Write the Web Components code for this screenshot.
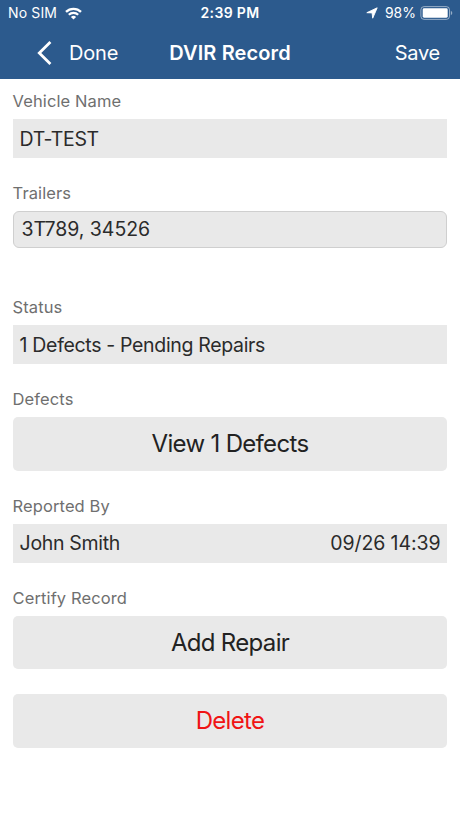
<!DOCTYPE html>
<html lang="en">
<head>
<meta charset="utf-8">
<meta name="viewport" content="width=device-width, initial-scale=1">
<title>DVIR Record</title>
<style>
  body {
    margin: 0;
    background: #fff;
    font-family: Inter, "Liberation Sans", sans-serif;
  }
</style>
</head>
<body>
<dvir-screen></dvir-screen>

<script>
class StatusBar extends HTMLElement {
  constructor() {
    super();
    this.attachShadow({ mode: "open" });
  }
  connectedCallback() {
    this.shadowRoot.innerHTML = `
      <style>
        :host {
          display: grid;
          grid-template-columns: 1fr auto 1fr;
          align-items: center;
          height: 26px;
          padding: 0 7px 0 8px;
          font-size: 14px;
          line-height: 26px;
          white-space: nowrap;
        }
        .left, .right {
          display: flex;
          align-items: center;
        }
        .right {
          justify-content: flex-end;
        }
        .carrier {
          letter-spacing: 0.15px;
        }
        .time {
          margin-right: 1px;
          font-weight: 600;
          letter-spacing: 0.35px;
        }
        .wifi {
          margin-left: 8px;
        }
        .battery {
          margin-left: 4px;
        }
        .percent {
          margin-left: 7px;
        }
        svg {
          display: block;
        }
      </style>
      <div class="left">
        <span class="carrier">${this.getAttribute("carrier")}</span>
        <svg class="wifi" width="17" height="13" viewBox="0 0 17 13" fill="none" stroke="#fff">
          <path d="M1 4.9a10.6 10.6 0 0 1 15 0" stroke-width="2.3"/>
          <path d="M3.8 7.8a6.7 6.7 0 0 1 9.4 0" stroke-width="2.2"/>
          <path d="M8.5 12.6 5.9 10a3.7 3.7 0 0 1 5.2 0z" fill="#fff" stroke="none"/>
        </svg>
      </div>
      <span class="time">${this.getAttribute("time")}</span>
      <div class="right">
        <svg width="12" height="12" viewBox="0 0 12 12">
          <path d="M11.2.8 6.7 11.2 6.1 5.9.8 5.7z" fill="#fff" stroke="#fff" stroke-width=".9" stroke-linejoin="round"/>
        </svg>
        <span class="percent">${this.getAttribute("battery")}</span>
        <svg class="battery" width="33" height="14" viewBox="0 0 33 14">
          <rect x=".9" y=".6" width="28.6" height="12.8" rx="3.2" fill="none" stroke="#fff" stroke-opacity=".5"/>
          <rect x="2.7" y="2.3" width="25" height="9.4" rx="1.4" fill="#fff"/>
          <path d="M30.8 4.8q1.5.8 1.5 2.2t-1.5 2.2z" fill="#fff" fill-opacity=".5"/>
        </svg>
      </div>
    `;
  }
}
customElements.define("status-bar", StatusBar);

class NavBar extends HTMLElement {
  constructor() {
    super();
    this.attachShadow({ mode: "open" });
  }
  connectedCallback() {
    this.shadowRoot.innerHTML = `
      <style>
        :host {
          display: grid;
          grid-template-columns: 1fr auto 1fr;
          align-items: center;
          height: 53px;
          padding: 0 20px 0 37px;
          box-sizing: border-box;
          font-size: 20px;
          line-height: 26px;
        }
        .back {
          display: flex;
          align-items: center;
          gap: 17px;
          padding-top: 1px;
          letter-spacing: -0.2px;
        }
        .title {
          margin-right: 17px;
          font-weight: 600;
          letter-spacing: 0.12px;
        }
        .save {
          text-align: right;
          letter-spacing: -0.25px;
        }
        svg {
          display: block;
        }
      </style>
      <div class="back">
        <svg width="15" height="24" viewBox="0 0 15 24" fill="none" stroke="#fff" stroke-width="2.8">
          <path d="M13.4 1 2.3 12l11.1 11"/>
        </svg>
        <slot name="back"></slot>
      </div>
      <span class="title"><slot></slot></span>
      <div class="save"><slot name="action"></slot></div>
    `;
  }
}
customElements.define("nav-bar", NavBar);

class FormRow extends HTMLElement {
  constructor() {
    super();
    this.attachShadow({ mode: "open" });
  }
  connectedCallback() {
    this.shadowRoot.innerHTML = `
      <style>
        :host {
          display: flex;
          flex-direction: column;
          gap: 8px;
        }
        .label {
          height: 20px;
          line-height: 20px;
          font-size: 16.5px;
          letter-spacing: 0.1px;
          color: #6f6f6f;
        }
      </style>
      <div class="label"><span>${this.getAttribute("label")}</span></div>
      <slot></slot>
    `;
  }
}
customElements.define("form-row", FormRow);

class ValueBox extends HTMLElement {
  constructor() {
    super();
    this.attachShadow({ mode: "open" });
  }
  connectedCallback() {
    this.shadowRoot.innerHTML = `
      <style>
        :host {
          display: flex;
          justify-content: space-between;
          align-items: center;
          height: 39px;
          padding: 0 7px;
          box-sizing: border-box;
          background: #e9e9e9;
          color: #2b2b2b;
          font-size: 19.5px;
          line-height: 26px;
          letter-spacing: -0.33px;
        }
        :host([outlined]) {
          height: 37px;
          padding: 0 8px 1px;
          border: 1px solid #cfcfcf;
          border-radius: 6px;
          letter-spacing: -0.05px;
        }
        ::slotted([slot="end"]) {
          letter-spacing: -0.1px;
        }
      </style>
      <slot></slot>
      <slot name="end"></slot>
    `;
  }
}
customElements.define("value-box", ValueBox);

class ActionButton extends HTMLElement {
  constructor() {
    super();
    this.attachShadow({ mode: "open" });
  }
  connectedCallback() {
    this.shadowRoot.innerHTML = `
      <style>
        :host {
          display: block;
        }
        button {
          display: block;
          width: 100%;
          height: 53.5px;
          margin: 0;
          padding: 0;
          border: none;
          border-radius: 5px;
          background: #e9e9e9;
          color: #222;
          font: inherit;
          font-size: 24px;
          letter-spacing: -0.68px;
        }
        :host([danger]) button {
          color: #f01414;
        }
      </style>
      <button><slot></slot></button>
    `;
  }
}
customElements.define("action-button", ActionButton);

class DvirScreen extends HTMLElement {
  constructor() {
    super();
    this.attachShadow({ mode: "open" });
  }
  connectedCallback() {
    this.shadowRoot.innerHTML = `
      <style>
        :host {
          display: block;
          min-height: 100vh;
        }
        header {
          height: 79px;
          background: #2c5a8d;
          color: #fff;
        }
        main {
          display: flex;
          flex-direction: column;
          gap: 25px;
          padding: 12px 12.6px 0;
        }
        .status {
          margin-top: 24px;
        }
      </style>
      <header>
        <status-bar carrier="No SIM" time="2:39 PM" battery="98%"></status-bar>
        <nav-bar>
          <span slot="back">Done</span>
          DVIR Record
          <span slot="action">Save</span>
        </nav-bar>
      </header>
      <main>
        <form-row label="Vehicle Name">
          <value-box><span>DT-TEST</span></value-box>
        </form-row>
        <form-row label="Trailers">
          <value-box outlined><span>3T789, 34526</span></value-box>
        </form-row>
        <form-row class="status" label="Status">
          <value-box><span>1 Defects - Pending Repairs</span></value-box>
        </form-row>
        <form-row label="Defects">
          <action-button>View 1 Defects</action-button>
        </form-row>
        <form-row label="Reported By">
          <value-box><span>John Smith</span><span slot="end">09/26 14:39</span></value-box>
        </form-row>
        <form-row label="Certify Record">
          <action-button>Add Repair</action-button>
        </form-row>
        <action-button danger>Delete</action-button>
      </main>
    `;
  }
}
customElements.define("dvir-screen", DvirScreen);
</script>
</body>
</html>
